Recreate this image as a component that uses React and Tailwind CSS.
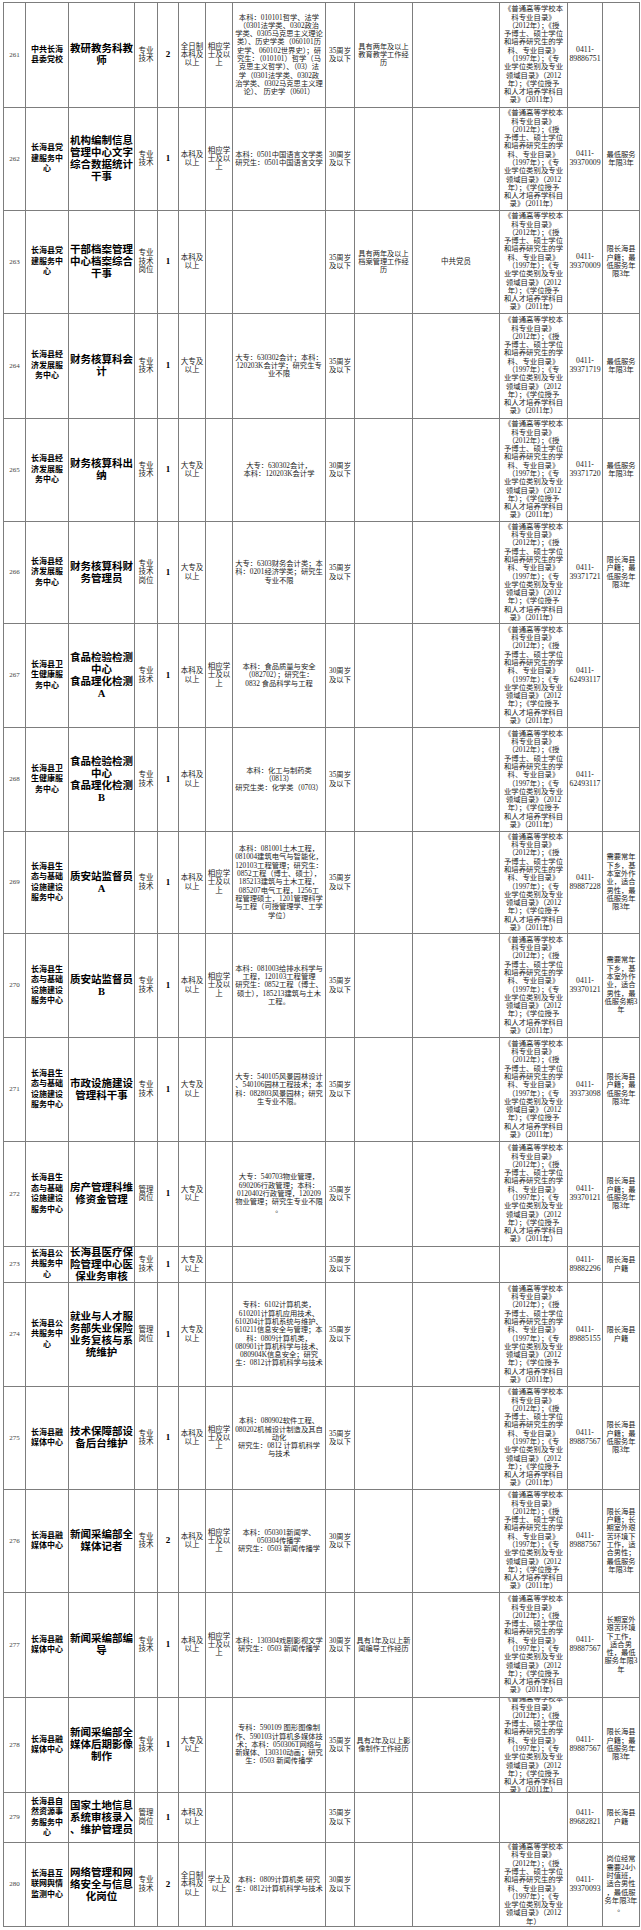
import React from "react";

const CAT = [
  "《普通高等学校本",
  "科专业目录》",
  "（2012年）；《授",
  "予博士、硕士学位",
  "和培养研究生的学",
  "科、专业目录》",
  "（1997年）；《专",
  "业学位类别及专业",
  "领域目录》（2012",
  "年）；《学位授予",
  "和人才培养学科目",
  "录》（2011年）",
];
const CAT280 = CAT.slice(0, 9).concat(["年）"]);

const ZY = ["专业", "技术"];
const ZYG = ["专业", "技术", "岗位"];
const GL = ["管理", "岗位"];
const BK = ["本科及", "以上"];
const DZ = ["大专及", "以上"];
const QRZ = ["全日制", "本科及", "以上"];
const XY = ["相应学", "士及以", "上"];
const A35 = ["35周岁", "及以下"];
const A30 = ["30周岁", "及以下"];
const N3 = ["最低服务", "年限3年"];
const NH = ["限长海县", "户籍；最", "低服务年", "限3年"];
const NHJ = ["限长海县", "户籍"];
const U_JJ = ["长海县经", "济发展服", "务中心"];
const U_WS = ["长海县卫", "生健康服", "务中心"];
const U_ST = ["长海县生", "态与基础", "设施建设", "服务中心"];
const U_RM = ["长海县融", "媒体中心"];
const U_DJ = ["长海县党", "建服务中", "心"];
const U_GG = ["长海县公", "共服务中", "心"];

const rows = [
  {
    n: "261", h: 105, unit: ["中共长海", "县委党校"], title: ["教研教务科教", "师"], type: ZY, count: "2",
    edu: QRZ, deg: XY,
    major: [
      "本科：010101哲学、法学",
      "（0301法学类、0302政治",
      "学类、0305马克思主义理论",
      "类）、历史学类（060101历",
      "史学、060102世界史）；研",
      "究生：（010101）哲学（马",
      "克思主义哲学）、（03）法",
      "学（0301法学类、0302政",
      "治学类、0302马克思主义理",
      "论）、  历史学（0601）",
    ],
    age: A35, exp: ["具有两年及以上", "教育教学工作经", "历"], other: "", cat: CAT, phone: "89886751", note: [],
  },
  {
    n: "262", h: 103, unit: U_DJ, title: ["机构编制信息", "管理中心文字", "综合数据统计", "干事"], type: ZY, count: "1",
    edu: BK, deg: XY, major: ["本科：0501中国语言文学类", "研究生：0501中国语言文学"],
    age: A30, exp: [], other: "", cat: CAT, phone: "39370009", note: N3,
  },
  {
    n: "263", h: 103, unit: U_DJ, title: ["干部档案管理", "中心档案综合", "干事"], type: ZYG, count: "1",
    edu: BK, deg: [], major: [], age: A35, exp: ["具有两年及以上", "档案管理工作经", "历"], other: "中共党员",
    cat: CAT, phone: "39370009", note: NH,
  },
  {
    n: "264", h: 105, unit: U_JJ, title: ["财务核算科会", "计"], type: ZY, count: "1", edu: DZ, deg: [],
    major: ["大专：630302会计；本科：", "120203K会计学；研究生专", "业不限"],
    age: A35, exp: [], other: "", cat: CAT, phone: "39371719", note: N3,
  },
  {
    n: "265", h: 103, unit: U_JJ, title: ["财务核算科出", "纳"], type: ZY, count: "1", edu: DZ, deg: [],
    major: ["大专：630302会计，", "本科：120203K会计学"],
    age: A30, exp: [], other: "", cat: CAT, phone: "39371720", note: N3,
  },
  {
    n: "266", h: 102, unit: U_JJ, title: ["财务核算科财", "务管理员"], type: ZYG, count: "1", edu: DZ, deg: [],
    major: ["大专：6303财务会计类；本", "科：0201经济学类；研究生", "专业不限"],
    age: A35, exp: [], other: "", cat: CAT, phone: "39371721", note: NH,
  },
  {
    n: "267", h: 104, unit: U_WS, title: ["食品检验检测", "中心", "食品理化检测", "A"], type: ZY, count: "1",
    edu: BK, deg: XY, major: ["本科：食品质量与安全", "（082702）；研究生：", "0832 食品科学与工程"],
    age: A30, exp: [], other: "", cat: CAT, phone: "62493117", note: [],
  },
  {
    n: "268", h: 104, unit: U_WS, title: ["食品检验检测", "中心", "食品理化检测", "B"], type: ZY, count: "1",
    edu: BK, deg: [], major: ["本科：化工与制药类", "（0813）", "研究生类：化学类（0703）"],
    age: A35, exp: [], other: "", cat: CAT, phone: "62493117", note: [],
  },
  {
    n: "269", h: 102, unit: U_ST, title: ["质安站监督员", "A"], type: ZY, count: "1", edu: BK, deg: XY,
    major: [
      "本科：081001土木工程，",
      "081004建筑电气与智能化，",
      "120103工程管理；研究生：",
      "0852工程（博士、硕士），",
      "185213建筑与土木工程，",
      "085207电气工程，1256工",
      "程管理硕士，1201管理科学",
      "与工程（可授管理学、工学",
      "学位）",
    ],
    age: A35, exp: [], other: "", cat: CAT, phone: "89887228",
    note: ["需要常年", "下乡，基", "本室外作", "业，适合", "男性，最", "低服务年", "限3年"],
  },
  {
    n: "270", h: 104, unit: U_ST, title: ["质安站监督员", "B"], type: ZY, count: "1", edu: BK, deg: XY,
    major: ["本科：081003给排水科学与", "工程，120103工程管理", "研究生：0852工程（博士、", "硕士），185213建筑与土木", "工程。"],
    age: A35, exp: [], other: "", cat: CAT, phone: "39370121",
    note: ["需要常年", "下乡，基", "本室外作", "业，适合", "男性，最", "低服务期3", "年"],
  },
  {
    n: "271", h: 104, unit: U_ST, title: ["市政设施建设", "管理科干事"], type: ZY, count: "1", edu: DZ, deg: [],
    major: ["大专：540105风景园林设计", "、540106园林工程技术；本", "科：082803风景园林；研究", "生专业不限。"],
    age: A35, exp: [], other: "", cat: CAT, phone: "39373098", note: NH,
  },
  {
    n: "272", h: 105, unit: U_ST, title: ["房产管理科维", "修资金管理"], type: GL, count: "1", edu: DZ, deg: [],
    major: ["大专：540703物业管理，", "690206行政管理；本科：", "0120402行政管理，120209", "物业管理；研究生专业不限", "。"],
    age: A35, exp: [], other: "", cat: CAT, phone: "39370121", note: NH,
  },
  {
    n: "273", h: 36, unit: U_GG, title: ["长海县医疗保", "险管理中心医", "保业务审核"], type: ZY, count: "1", edu: DZ,
    deg: [], major: [], age: A35, exp: [], other: "", cat: [], phone: "89882296", note: NHJ,
  },
  {
    n: "274", h: 104, unit: U_GG, title: ["就业与人才服", "务部失业保险", "业务复核与系", "统维护"], type: GL, count: "1",
    edu: DZ, deg: [],
    major: [
      "专科：6102计算机类，",
      "610201计算机应用技术、",
      "610204计算机系统与维护、",
      "610211信息安全与管理；本",
      "科：0809计算机类，",
      "080901计算机科学与技术、",
      "080904K信息安全；研究",
      "生：0812计算机科学与技术",
    ],
    age: A35, exp: [], other: "", cat: CAT, phone: "89885155", note: NHJ,
  },
  {
    n: "275", h: 103, unit: U_RM, title: ["技术保障部设", "备后台维护"], type: ZY, count: "1", edu: BK, deg: XY,
    major: ["本科：080902软件工程、", "080202机械设计制造及其自", "动化", "研究生：0812 计算机科学", "与技术"],
    age: A35, exp: [], other: "", cat: CAT, phone: "89887567", note: NH,
  },
  {
    n: "276", h: 103, unit: U_RM, title: ["新闻采编部全", "媒体记者"], type: ZY, count: "2", edu: BK, deg: XY,
    major: ["本科：050301新闻学、", "050304传播学", "研究生：0503 新闻传播学"],
    age: A30, exp: [], other: "", cat: CAT, phone: "89887567",
    note: ["限长海县", "户籍；长", "期室外艰", "苦环境下", "工作，适", "合男性；", "最低服务", "年限3年"],
  },
  {
    n: "277", h: 105, unit: U_RM, title: ["新闻采编部编", "导"], type: ZY, count: "1", edu: BK, deg: XY,
    major: ["本科：130304戏剧影视文学", "研究生：0503 新闻传播学"],
    age: A30, exp: ["具有1年及以上新", "闻编导工作经历"], other: "", cat: CAT, phone: "89887567",
    note: ["长期室外", "艰苦环境", "下工作，", "适合男", "性，最低", "服务年限3", "年"],
  },
  {
    n: "278", h: 95, unit: U_RM, title: ["新闻采编部全", "媒体后期影像", "制作"], type: ZY, count: "1", edu: DZ, deg: [],
    major: ["专科：590109 图形图像制", "作、590103计算机多媒体技", "术；本科：050306T网络与", "新媒体、130310动画；研究", "生：0503 新闻传播学"],
    age: A35, exp: ["具有2年及以上影", "像制作工作经历"], other: "", cat: CAT, phone: "89887567", note: NH,
  },
  {
    n: "279", h: 50, unit: ["长海县自", "然资源事", "务服务中", "心"], title: ["国家土地信息", "系统审核录入", "、维护管理员"], type: GL,
    count: "1", edu: BK, deg: [], major: [], age: A35, exp: [], other: "", cat: [], phone: "89682821", note: NHJ,
  },
  {
    n: "280", h: 84, unit: ["长海县互", "联网舆情", "监测中心"], title: ["网络管理和网", "络安全与信息", "化岗位"], type: ZY, count: "2",
    edu: QRZ, deg: ["学士及", "以上"], major: ["本科：0809计算机类 研究", "生：0812计算机科学与技术"],
    age: A30, exp: [], other: "", cat: CAT280, phone: "39370093",
    note: ["岗位经常", "需要24小", "时值班，", "适合男性", "，最低服", "务年限3年", "。"],
  },
];

function Cell({ lines, className }) {
  return (
    <div
      className={`flex items-center justify-center text-center border-r border-b border-[#7d7d7d] overflow-hidden whitespace-nowrap ${className}`}
    >
      <div>
        {lines.map((l, i) => (
          <React.Fragment key={i}>
            {i > 0 && <br />}
            {l}
          </React.Fragment>
        ))}
      </div>
    </div>
  );
}

const small = "text-[7.3px] leading-[8.3px] text-[#222]";

function Row({ r }) {
  return (
    <div
      className="grid grid-cols-[22px_43px_66px_23px_21px_27px_27px_93px_29px_58px_87px_68px_35px_37px]"
      style={{ height: r.h }}
    >
      <Cell lines={[r.n]} className="text-[7px] text-[#444]" />
      <Cell lines={r.unit} className="text-[8px] leading-[10.5px] font-bold text-black" />
      <Cell lines={r.title} className="text-[10.5px] leading-[12px] font-bold text-black" />
      <Cell lines={r.type} className="text-[7.5px] leading-[8.5px] text-[#222]" />
      <Cell lines={[r.count]} className="text-[9px] font-bold text-black" />
      <Cell lines={r.edu} className="text-[7.5px] leading-[8.3px] text-[#222]" />
      <Cell lines={r.deg} className="text-[7.5px] leading-[8.3px] text-[#222]" />
      <Cell lines={r.major} className={small} />
      <Cell lines={r.age} className={small} />
      <Cell lines={r.exp} className="text-[7.2px] leading-[8.3px] text-[#222]" />
      <Cell lines={r.other ? [r.other] : []} className="text-[7.5px] text-[#222]" />
      <Cell lines={r.cat} className="text-[7.4px] leading-[8.3px] text-[#222]" />
      <Cell lines={["0411-", r.phone]} className="text-[7.8px] leading-[8.6px] text-[#222]" />
      <Cell lines={r.note} className={small} />
    </div>
  );
}

export default function App() {
  return (
    <div className="w-[641px] min-h-[1930px] bg-white pt-[2px] pl-[3px] font-['Liberation_Serif','Noto_Sans_CJK_SC',serif]">
      <div className="w-[637px] border-l border-t border-[#7d7d7d]">
        {rows.map((r) => (
          <Row key={r.n} r={r} />
        ))}
      </div>
    </div>
  );
}
